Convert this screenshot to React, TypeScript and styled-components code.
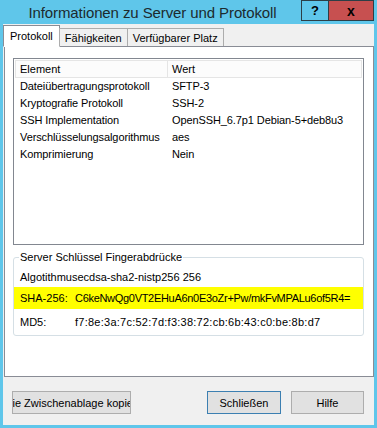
import styled, { createGlobalStyle } from "styled-components";

const GlobalStyle = createGlobalStyle`
  html, body {
    margin: 0;
    padding: 0;
    background: #5fc6ea;
  }
  * {
    box-sizing: border-box;
  }
`;

const Window = styled.div`
  width: 377px;
  height: 428px;
  display: flex;
  flex-direction: column;
  padding: 0 3px 3px 3px;
  background: #5fc6ea;
  font-family: "Liberation Sans", Arial, sans-serif;
  font-size: 11px;
  color: #000;
`;

const TitleBar = styled.div`
  height: 24px;
  display: flex;
  align-items: flex-start;
`;

const Title = styled.div`
  flex: 1;
  text-align: center;
  font-size: 15px;
  letter-spacing: -0.1px;
  line-height: 26px;
  color: #1c2a2e;
`;

const CaptionButton = styled.div<{ $close?: boolean }>`
  width: ${p => (p.$close ? "46px" : "28px")};
  height: 21px;
  display: flex;
  align-items: center;
  justify-content: center;
  border: 1px solid #2c3e46;
  margin-left: -1px;
  background: ${p => (p.$close ? "#c75050" : "#5fc6ea")};
  font-weight: bold;
  font-size: ${p => (p.$close ? "14px" : "13px")};
  color: #000;
`;

const Client = styled.div`
  flex: 1;
  display: flex;
  flex-direction: column;
  background: #f0f0f0;
`;

const TabStrip = styled.div`
  height: 22px;
  display: flex;
  align-items: flex-end;
  padding-top: 1px;
  position: relative;
  z-index: 1;
`;

const Tab = styled.div<{ $active?: boolean }>`
  height: ${p => (p.$active ? "22px" : "18px")};
  padding: ${p => (p.$active ? "0 6px" : "0 5px")};
  margin-left: ${p => (p.$active ? "0" : "-1px")};
  display: flex;
  align-items: center;
  border: 1px solid ${p => (p.$active ? "#898c95" : "#acacac")};
  border-bottom: ${p => (p.$active ? "1px solid #fff" : "none")};
  background: ${p => (p.$active ? "#fff" : "#f0f0f0")};
  margin-bottom: ${p => (p.$active ? "-1px" : "0")};
  &:first-child {
    margin-left: 0;
  }
`;

const Panel = styled.div`
  margin-left: 1px;
  height: 331px;
  background: #fff;
  border: 1px solid #898c95;
  padding: 11px 9px 0 8px;
  display: flex;
  flex-direction: column;
`;

const ListBox = styled.div`
  height: 187px;
  border: 1px solid #828790;
  padding: 1px;
  display: flex;
  flex-direction: column;
`;

const HeaderRow = styled.div`
  height: 18px;
  display: flex;
  border: 1px solid #e5e5e5;
  background: #fcfcfc;
`;

const HeaderCell = styled.div<{ $w?: number }>`
  width: ${p => (p.$w ? `${p.$w}px` : "auto")};
  flex: ${p => (p.$w ? "none" : "1")};
  padding-left: 4px;
  line-height: 16px;
  border-right: 1px solid #e5e5e5;
  &:last-child {
    border-right: none;
  }
`;

const Row = styled.div`
  height: 17px;
  display: flex;
  line-height: 17px;
`;

const Cell = styled.div<{ $w?: number }>`
  width: ${p => (p.$w ? `${p.$w}px` : "auto")};
  flex: ${p => (p.$w ? "none" : "1")};
  padding-left: 5px;
  white-space: nowrap;
  letter-spacing: -0.1px;
`;

const GroupBox = styled.fieldset`
  margin: 6px 0 0 0;
  padding: 0 0 5px 0;
  border: 1px solid #d5dfe5;
  border-radius: 3px;
  min-width: 0;
`;

const Legend = styled.legend`
  margin-left: 5px;
  padding: 0 1px;
  color: #000;
`;

const InfoLine = styled.div<{ $highlight?: boolean }>`
  height: ${p => (p.$highlight ? "22px" : "16px")};
  margin-top: ${p => (p.$highlight ? "2px" : "5px")};
  display: flex;
  align-items: center;
  padding-left: 6px;
  background: ${p => (p.$highlight ? "#ffff00" : "transparent")};
  white-space: nowrap;
  &:first-of-type {
    margin-top: 6px;
  }
`;

const InfoLabel = styled.span`
  width: 55px;
  flex: none;
`;

const InfoValue = styled.span<{ $spacing: number }>`
  letter-spacing: ${p => p.$spacing}px;
`;

const ButtonRow = styled.div`
  display: flex;
  padding: 14px 10px 0 9px;
`;

const Button = styled.div<{ $default?: boolean; $w: number }>`
  width: ${p => p.$w}px;
  height: 23px;
  display: flex;
  align-items: center;
  justify-content: center;
  overflow: hidden;
  white-space: nowrap;
  background: #e1e1e1;
  border: 1px solid ${p => (p.$default ? "#3c7fb1" : "#adadad")};
  margin-left: 10px;
  &:first-child {
    margin-left: 0;
    margin-right: auto;
  }
`;

const rows = [
  ["Dateiübertragungsprotokoll", "SFTP-3"],
  ["Kryptografie Protokoll", "SSH-2"],
  ["SSH Implementation", "OpenSSH_6.7p1 Debian-5+deb8u3"],
  ["Verschlüsselungsalgorithmus", "aes"],
  ["Komprimierung", "Nein"],
];

export default function App() {
  return (
    <Window>
      <GlobalStyle />
      <TitleBar>
        <Title>Informationen zu Server und Protokoll</Title>
        <CaptionButton>?</CaptionButton>
        <CaptionButton $close>x</CaptionButton>
      </TitleBar>
      <Client>
        <TabStrip>
          <Tab $active>Protokoll</Tab>
          <Tab>Fähigkeiten</Tab>
          <Tab>Verfügbarer Platz</Tab>
        </TabStrip>
        <Panel>
          <ListBox>
            <HeaderRow>
              <HeaderCell $w={152}>Element</HeaderCell>
              <HeaderCell>Wert</HeaderCell>
            </HeaderRow>
            {rows.map(([k, v]) => (
              <Row key={k}>
                <Cell $w={152}>{k}</Cell>
                <Cell>{v}</Cell>
              </Row>
            ))}
          </ListBox>
          <GroupBox>
            <Legend>Server Schlüssel Fingerabdrücke</Legend>
            <InfoLine>Algotithmusecdsa-sha2-nistp256 256</InfoLine>
            <InfoLine $highlight>
              <InfoLabel>SHA-256:</InfoLabel>
              <InfoValue $spacing={-0.3}>C6keNwQg0VT2EHuA6n0E3oZr+Pw/mkFvMPALu6of5R4=</InfoValue>
            </InfoLine>
            <InfoLine>
              <InfoLabel>MD5:</InfoLabel>
              <InfoValue $spacing={0.25}>f7:8e:3a:7c:52:7d:f3:38:72:cb:6b:43:c0:be:8b:d7</InfoValue>
            </InfoLine>
          </GroupBox>
        </Panel>
        <ButtonRow>
          <Button $w={119}>In die Zwischenablage kopieren</Button>
          <Button $w={74} $default>
            Schließen
          </Button>
          <Button $w={73}>Hilfe</Button>
        </ButtonRow>
      </Client>
    </Window>
  );
}
